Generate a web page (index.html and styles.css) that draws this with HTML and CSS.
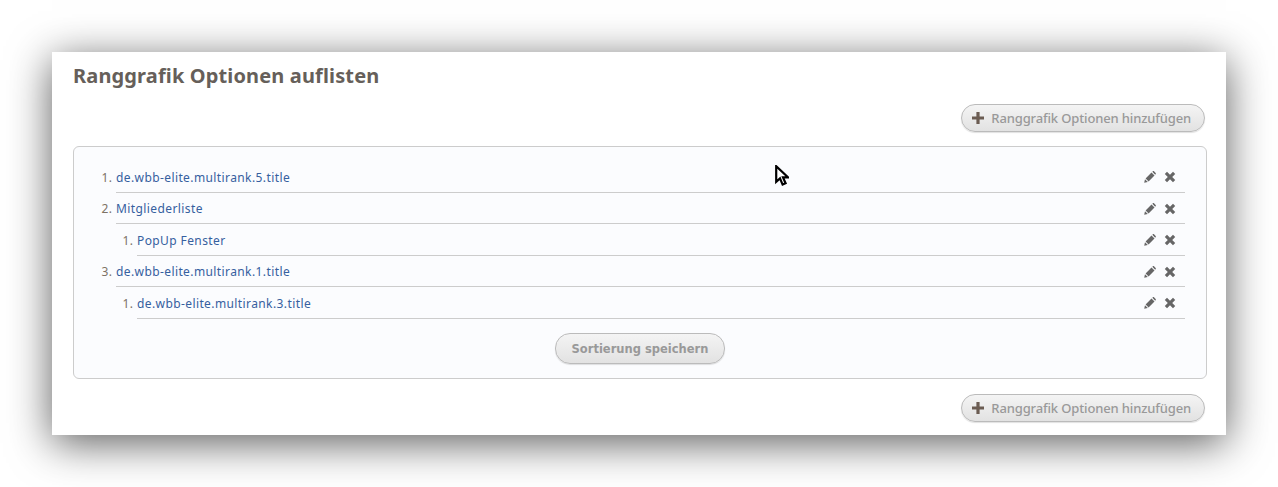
FILE: index.html
```html
<!DOCTYPE html>
<html lang="de">
<head>
    <meta charset="UTF-8">
    <meta name="viewport" content="width=device-width, initial-scale=1.0">
    <title>Ranggrafik Optionen auflisten</title>
    <link rel="stylesheet" href="styles.css">
</head>
<body>
    <div class="window">
        <h1>Ranggrafik Optionen auflisten</h1>

        <div class="button-container">
            <a href="#" class="button">
                <svg class="icon-plus" viewBox="0 0 12 12"><path d="M4.4 0h3.2v4.4H12v3.2H7.6V12H4.4V7.6H0V4.4h4.4z"/></svg>
                Ranggrafik Optionen hinzufügen
            </a>
        </div>

        <div class="panel">
            <ol class="sort-list">
                <li>
                    <div class="row">
                        <a href="#">de.wbb-elite.multirank.5.title</a>
                        <span class="actions">
                            <svg class="icon" viewBox="0 0 12 12"><use href="#pencil"/></svg>
                            <svg class="icon" viewBox="0 0 12 12"><use href="#cross"/></svg>
                        </span>
                    </div>
                </li>
                <li>
                    <div class="row">
                        <a href="#">Mitgliederliste</a>
                        <span class="actions">
                            <svg class="icon" viewBox="0 0 12 12"><use href="#pencil"/></svg>
                            <svg class="icon" viewBox="0 0 12 12"><use href="#cross"/></svg>
                        </span>
                    </div>
                    <ol>
                        <li>
                            <div class="row">
                                <a href="#">PopUp Fenster</a>
                                <span class="actions">
                                    <svg class="icon" viewBox="0 0 12 12"><use href="#pencil"/></svg>
                                    <svg class="icon" viewBox="0 0 12 12"><use href="#cross"/></svg>
                                </span>
                            </div>
                        </li>
                    </ol>
                </li>
                <li>
                    <div class="row">
                        <a href="#">de.wbb-elite.multirank.1.title</a>
                        <span class="actions">
                            <svg class="icon" viewBox="0 0 12 12"><use href="#pencil"/></svg>
                            <svg class="icon" viewBox="0 0 12 12"><use href="#cross"/></svg>
                        </span>
                    </div>
                    <ol>
                        <li>
                            <div class="row">
                                <a href="#">de.wbb-elite.multirank.3.title</a>
                                <span class="actions">
                                    <svg class="icon" viewBox="0 0 12 12"><use href="#pencil"/></svg>
                                    <svg class="icon" viewBox="0 0 12 12"><use href="#cross"/></svg>
                                </span>
                            </div>
                        </li>
                    </ol>
                </li>
            </ol>
            <div class="save-container">
                <button class="button-save" type="button">Sortierung speichern</button>
            </div>
        </div>

        <div class="button-container bottom">
            <a href="#" class="button">
                <svg class="icon-plus" viewBox="0 0 12 12"><path d="M4.4 0h3.2v4.4H12v3.2H7.6V12H4.4V7.6H0V4.4h4.4z"/></svg>
                Ranggrafik Optionen hinzufügen
            </a>
        </div>
    </div>

    <!-- mouse cursor caught in the screenshot -->
    <svg class="cursor" viewBox="0 0 14 22">
        <path d="M1.2 1.2v15.6l3.8-3.4 2.6 6.2 3-1.3L8 12.4h5.2z" fill="#fff" stroke="#000" stroke-width="2.2" stroke-linejoin="miter"/>
    </svg>

    <svg class="defs" aria-hidden="true">
        <defs>
            <g id="pencil">
                <path d="M0.2 11.8l0.8-3.6 2.8 2.8z"/>
                <path d="M1.6 7.4L7.5 1.5l3 3-5.9 5.9z"/>
                <path d="M8.3 0.8l0.6-0.5c0.3-0.3 0.8-0.3 1.1 0l1.7 1.7c0.3 0.3 0.3 0.8 0 1.1l-0.5 0.6z"/>
            </g>
            <path id="cross" d="M3 0.8L6 3.8l3-3L11.2 3l-3 3 3 3L9 11.2l-3-3-3 3L0.8 9l3-3-3-3z"/>
        </defs>
    </svg>
</body>
</html>
```

FILE: styles.css
```css
html, body { margin: 0; height: 487px; overflow: hidden; background: #fff; }
body { padding: 52px 52px 0; box-sizing: border-box; font-family: "Noto Sans", Arial, sans-serif; font-size: 12px; color: #666; }
a { text-decoration: none; }

.window { height: 383px; box-sizing: border-box; padding: 0 19px 0 21px; background: #fff; box-shadow: 0 8px 40px rgba(0, 0, 0, 0.64); }
h1 { margin: 0; padding-top: 10px; height: 52px; box-sizing: border-box; font-size: 20px; line-height: 27px; font-weight: bold; color: #665f5a; letter-spacing: 0.14px; }

.button-container { display: flex; justify-content: flex-end; margin-right: 2px; }
.button-container.bottom { margin-top: 15px; }
.button { display: flex; align-items: center; gap: 7px; height: 28px; box-sizing: border-box; padding: 0 13px 0 10px; border: 1px solid #bbb; border-radius: 14px; background: linear-gradient(#f4f4f4, #e2e2e2); box-shadow: 0 1px 1px rgba(0, 0, 0, 0.12); color: #999; font-size: 13px; font-weight: 500; letter-spacing: -0.14px; white-space: nowrap; }
.icon-plus { width: 12px; height: 12px; fill: #6b5c52; }

.panel { height: 233px; box-sizing: border-box; margin-top: 14px; padding: 14px 21px 0 0; border: 1px solid #ccc; border-radius: 6px; background: #fbfcfe; }
.sort-list, .sort-list ol { margin: 0; padding: 0; letter-spacing: 0.4px; }
.sort-list { padding-left: 42px; }
.sort-list ol { padding-left: 21px; }
.sort-list li::marker { color: #7d7265; }
.row { display: flex; justify-content: space-between; align-items: center; height: 31.5px; box-sizing: border-box; border-bottom: 1px solid #ccc; padding-top: 2px; }
.row a { color: #36609f; }
.actions { display: flex; gap: 8px; margin-right: 9px; }
.icon { width: 12px; height: 12px; fill: #666; display: block; }

.save-container { display: flex; justify-content: center; margin-top: 14px; padding-left: 21px; }
.button-save { width: 170px; height: 31px; padding: 1px 0 0; border: 1px solid #bbb; border-radius: 15px; background: linear-gradient(#f4f4f4, #e2e2e2); box-shadow: 0 1px 1px rgba(0, 0, 0, 0.12); color: #999; font-family: "DejaVu Sans", Verdana, sans-serif; font-size: 11.5px; font-weight: bold; }

.cursor { position: absolute; left: 775px; top: 165px; width: 14px; height: 22px; }
.defs { position: absolute; width: 0; height: 0; }
```
